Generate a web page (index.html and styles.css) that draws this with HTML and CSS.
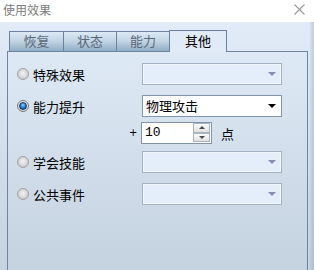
FILE: index.html
```html
<!DOCTYPE html>
<html lang="zh-CN">
  <head>
    <meta charset="UTF-8" />
    <title>使用效果</title>
    <link rel="stylesheet" href="styles.css">
  </head>
  <body>
    <div class="titlebar">
      <span class="title">使用效果</span>
      <svg class="close" width="11" height="11" viewBox="0 0 11 11">
        <path d="M0.5 0.5 L10.5 10.5 M10.5 0.5 L0.5 10.5" stroke="#9a9a9a" stroke-width="1.1" fill="none" />
      </svg>
    </div>

    <div class="window">
      <div class="content">
        <div class="tabs">
          <div class="tab t1">恢复</div>
          <div class="tab t2">状态</div>
          <div class="tab t3">能力</div>
          <div class="tab active">其他</div>
        </div>

        <div class="panel">
          <div class="row">
            <label class="opt"><span class="radio"></span>特殊效果</label>
            <div class="combo disabled"><span class="arrow"></span></div>
          </div>

          <div class="row r2">
            <label class="opt"><span class="radio checked"></span>能力提升</label>
            <div class="combo"><span class="value">物理攻击</span><span class="arrow"></span></div>
          </div>

          <div class="row spin-row">
            <span class="plus">+</span>
            <div class="spin">
              <span class="num">10</span>
              <div class="btns">
                <span class="btn up"><i></i></span>
                <span class="btn down"><i></i></span>
              </div>
            </div>
            <span class="unit">点</span>
          </div>

          <div class="row r4">
            <label class="opt"><span class="radio"></span>学会技能</label>
            <div class="combo disabled"><span class="arrow"></span></div>
          </div>

          <div class="row r5">
            <label class="opt"><span class="radio"></span>公共事件</label>
            <div class="combo disabled"><span class="arrow"></span></div>
          </div>
        </div>
      </div>
      <div class="edge"></div>
    </div>
  </body>
</html>
```

FILE: styles.css
```css
* {
  box-sizing: border-box;
}

body {
  margin: 0;
  width: 314px;
  height: 270px;
  overflow: hidden;
  font-family: "Noto Sans CJK SC", "DejaVu Sans", sans-serif;
  font-size: 13px;
  color: #000;
  background: #fff;
}

.titlebar {
  height: 22px;
  background: #fff;
  display: flex;
  justify-content: space-between;
  align-items: center;
  padding: 0 9px 2px 3px;
}

.title {
  color: #7c7c7c;
  font-size: 12px;
  line-height: 14px;
}

.close {
  display: block;
  margin-top: -2px;
}

.window {
  height: 248px;
  display: flex;
  background: linear-gradient(#e1ecf8, #c5d2df);
  overflow: hidden;
}

.content {
  flex: 1;
}

.edge {
  width: 4px;
  background: linear-gradient(to right, rgba(150, 170, 195, 0.15), rgba(120, 140, 170, 0.3));
}

/* tabs */
.tabs {
  height: 29px;
  display: flex;
  align-items: flex-end;
  padding-left: 9px;
}

.tab {
  height: 20px;
  border: 1px solid #6b81a0;
  border-bottom: none;
  background: linear-gradient(#dde9f5, #c0d3e3 50%, #90aec6);
  color: #5b6878;
  text-align: center;
  line-height: 18px;
}

.t1 {
  width: 55px;
}

.t2,
.t3 {
  width: 54px;
  margin-left: -1px;
}

.tab.active {
  position: relative;
  z-index: 1;
  width: 58px;
  height: 22px;
  margin-left: -1px;
  margin-bottom: -1px;
  background: #e0ebf7;
  color: #000;
  line-height: 20px;
}

/* panel */
.panel {
  width: 301px;
  height: 230px;
  margin-left: 7px;
  border: 1px solid #6f84a0;
  padding: 11px 0 0 9px;
}

.row {
  height: 22px;
  display: flex;
  align-items: center;
}

.r2 {
  margin-top: 10px;
}

.spin-row {
  margin-top: 5px;
  padding-left: 112px;
}

.r4 {
  margin-top: 7px;
}

.r5 {
  margin-top: 10px;
}

.opt {
  width: 125px;
  display: flex;
  align-items: center;
  gap: 4px;
}

.radio {
  width: 12px;
  height: 12px;
  border-radius: 50%;
  border: 1px solid #a2a2a2;
  background: radial-gradient(circle at 50% 45%, #f4f4f4, #d6d6d6 55%, #b4b4b4);
  display: flex;
  align-items: center;
  justify-content: center;
}

.radio.checked {
  border-color: #7a7a7a;
  background: radial-gradient(circle at 50% 40%, #ffffff, #e4e4e4 60%, #b8b8b8);
}

.radio.checked::after {
  content: "";
  width: 6px;
  height: 6px;
  border-radius: 50%;
  background: radial-gradient(circle at 50% 35%, #8fd0ff, #1f78c8 55%, #0c3f78);
  border: 1px solid #0d3566;
}

/* combo boxes */
.combo {
  width: 140px;
  height: 22px;
  border: 1px solid #8294a9;
  background: #fff;
  display: flex;
  align-items: center;
  padding: 0 5px 0 3px;
}

.combo.disabled {
  border-color: #a3b1c2;
  background: #e4eefa;
  box-shadow: inset 0 0 0 1px #f3f8fe;
}

.value {
  flex: 1;
  line-height: 20px;
}

.arrow {
  margin-left: auto;
  width: 0;
  height: 0;
  border-left: 4px solid transparent;
  border-right: 4px solid transparent;
  border-top: 4px solid #000;
}

.disabled .arrow {
  border-top-color: #8b8cb0;
}

/* spinner */
.plus {
  width: 12px;
  font-family: "DejaVu Sans", sans-serif;
  font-size: 10px;
  line-height: 10px;
}

.spin {
  width: 71px;
  height: 22px;
  border: 1px solid #8294a9;
  background: #fff;
  display: flex;
  align-items: stretch;
  padding: 0 1px 0 3px;
}

.num {
  flex: 1;
  font-family: "Liberation Mono", monospace;
  font-size: 13px;
  line-height: 20px;
}

.btns {
  width: 17px;
  display: flex;
  flex-direction: column;
  padding: 0 0 1px;
}

.btn {
  flex: 1;
  border: 1px solid #a9b3c2;
  background: linear-gradient(#fbfbfb, #e0e0e0);
  display: flex;
  align-items: center;
  justify-content: center;
}

.btn i {
  width: 0;
  height: 0;
  border-left: 3px solid transparent;
  border-right: 3px solid transparent;
}

.up i {
  border-bottom: 3px solid #4a4a4a;
}

.down i {
  border-top: 3px solid #4a4a4a;
}

.unit {
  margin-left: 9px;
}
```
